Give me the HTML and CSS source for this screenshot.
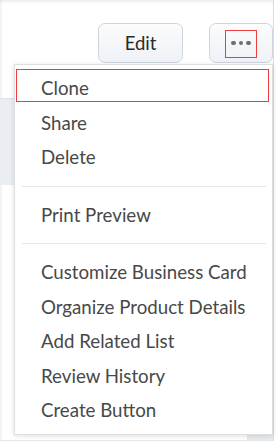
FILE: index.html
```html
<!DOCTYPE html>
<html>
<head>
<meta charset="utf-8">
<link rel="stylesheet" href="styles.css">
</head>
<body>
<div class="frame">
  <div class="toolbar">
    <button class="btn btn-edit">Edit</button>
    <button class="btn btn-more" aria-label="More">
      <span class="dot"></span><span class="dot"></span><span class="dot"></span>
    </button>
  </div>
  <div class="band"></div>
  <div class="spacer"></div>
  <div class="bottom"><span class="patch"></span></div>

  <div class="menu">
    <ul class="group">
      <li class="item">Clone</li>
      <li class="item">Share</li>
      <li class="item">Delete</li>
    </ul>
    <div class="divider"></div>
    <ul class="group">
      <li class="item">Print Preview</li>
    </ul>
    <div class="divider"></div>
    <ul class="group">
      <li class="item">Customize Business Card</li>
      <li class="item">Organize Product Details</li>
      <li class="item">Add Related List</li>
      <li class="item">Review History</li>
      <li class="item">Create Button</li>
    </ul>
  </div>

  <div class="mark mark-more"></div>
  <div class="mark mark-clone"></div>
</div>
</body>
</html>
```
FILE: styles.css
```css
* { box-sizing: border-box; }
html, body { margin: 0; padding: 0; background: #ffffff; }
body { font-family: Lato, "Open Sans", sans-serif; }

.frame {
  position: relative;
  width: 274px;
  height: 441px;
  background: #ffffff;
  border-right: 1px solid #dcdcdc;
  border-bottom: 1px solid #e6e6e6;
  box-shadow: inset 0 3px 3px -1px rgba(0,0,0,0.08), inset 3px 0 3px -2px rgba(0,0,0,0.08);
  display: flex;
  flex-direction: column;
}

.toolbar {
  display: flex;
  justify-content: flex-end;
  gap: 26px;
  padding-top: 23px;
}

.btn {
  height: 40px;
  border: 1px solid #cfd5df;
  border-radius: 7px;
  background: linear-gradient(#fbfcfd, #eef1f6);
  font-family: Lato, sans-serif;
  font-size: 18.5px;
  font-weight: 400;
  color: #2a2a2a;
  display: flex;
  align-items: center;
  justify-content: center;
  padding: 0;
  margin: 0;
}
.btn-edit { width: 85px; }
.btn-more { width: 64px; gap: 3px; }
.dot {
  width: 4.5px;
  height: 4.5px;
  border-radius: 50%;
  background: #6e6e6e;
}

.band {
  margin-top: 35px;
  width: 14px;
  height: 87px;
  background: #eaeef3;
  border-top: 1px solid #dfe3e8;
}
.spacer { flex: 1; }
.bottom {
  height: 6px;
  display: flex;
  justify-content: flex-end;
}
.patch {
  width: 26px;
  height: 6px;
  background: #e6ebf1;
}

.menu {
  position: absolute;
  left: 14px;
  top: 64px;
  width: 259px;
  background: #ffffff;
  border: 1px solid #dedede;
  box-shadow: 0 1px 5px rgba(0,0,0,0.13);
}
.group {
  list-style: none;
  margin: 0;
  padding: 6px 0;
}
.item {
  line-height: 34.5px;
  height: 34.5px;
  padding-left: 26px;
  font-size: 18.7px;
  font-weight: 400;
  color: #484848;
  white-space: nowrap;
}
.divider {
  height: 1px;
  background: #e8e8e8;
  margin: 5px 6px 5px 7px;
}

.mark {
  position: absolute;
  border: 1px solid #ee3b3b;
}
.mark-more { left: 225px; top: 30px; width: 32px; height: 28px; }
.mark-clone { left: 16px; top: 69px; width: 253px; height: 33px; }
```
